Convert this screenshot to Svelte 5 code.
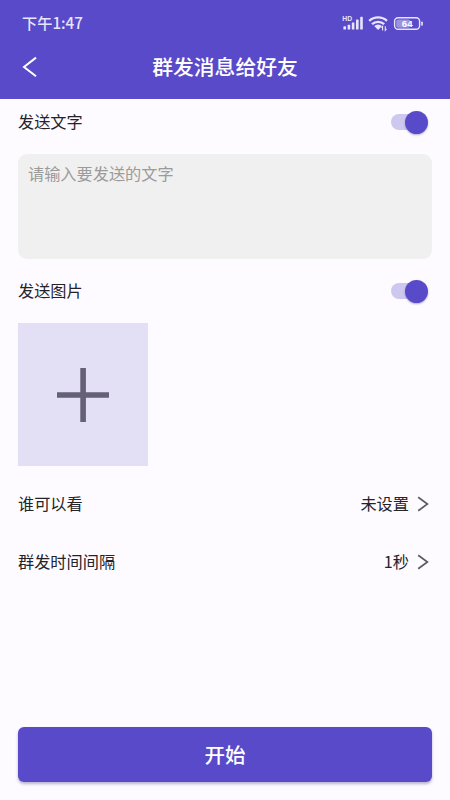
<script lang="ts">
  let sendText = true;
  let sendImage = true;
  let message = '';

  const settings = [
    { label: '谁可以看', value: '未设置' },
    { label: '群发时间间隔', value: '1秒' },
  ];
</script>

<div class="screen">
  <header>
    <div class="status-bar">
      <span class="time">下午1:47</span>
      <svg class="status-icons" width="84" height="20" viewBox="0 0 84 20" aria-hidden="true">
        <text class="hd" x="0.3" y="7.6">HD</text>
        <g fill="#e8e4fb">
          <rect x="1.4" y="13.2" width="2.6" height="3.4" rx="0.6" />
          <rect x="5.6" y="11.8" width="2.6" height="4.8" rx="0.6" />
          <rect x="9.8" y="9.4" width="2.6" height="7.2" rx="0.6" />
          <rect x="14" y="6.6" width="2.6" height="10" rx="0.6" />
          <rect x="18.2" y="3.8" width="2.6" height="12.8" rx="0.6" />
        </g>
        <g fill="none" stroke="#e8e4fb" stroke-width="2.3">
          <path d="M27.2 7.8a13.2 13.2 0 0 1 17.8 0" />
          <path d="M30 11.2a9 9 0 0 1 12.2 0" />
        </g>
        <path d="M32.2 13a5.8 5.8 0 0 1 7.8 0L36.1 17z" fill="#e8e4fb" />
        <path
          d="M40.6 17.5v-4.1l-1.2 1.3M43.3 13.2v4.1l1.2-1.3"
          fill="none"
          stroke="#e8e4fb"
          stroke-width="1.1"
        />
        <rect x="54.2" y="6.4" width="14" height="8.3" rx="2" fill="#9c92df" />
        <rect
          x="52.6"
          y="4.8"
          width="25"
          height="11.5"
          rx="3.5"
          fill="none"
          stroke="#e8e4fb"
          stroke-width="1.4"
        />
        <rect x="79.2" y="8.5" width="1.6" height="4.2" rx="0.7" fill="#e8e4fb" />
        <text class="battery" x="65.2" y="14">64</text>
      </svg>
    </div>
    <div class="nav">
      <button type="button" class="back" aria-label="返回">
        <svg width="16" height="22" viewBox="0 0 16 22">
          <path d="M14 1.6 2 11l12 9.2" />
        </svg>
      </button>
      <h1>群发消息给好友</h1>
    </div>
  </header>

  <main>
    <div class="row">
      <span class="label">发送文字</span>
      <button
        type="button"
        class="switch"
        class:on={sendText}
        role="switch"
        aria-checked={sendText}
        aria-label="发送文字"
        on:click={() => (sendText = !sendText)}
      ></button>
    </div>
    <textarea bind:value={message} placeholder="请输入要发送的文字"></textarea>

    <div class="row">
      <span class="label">发送图片</span>
      <button
        type="button"
        class="switch"
        class:on={sendImage}
        role="switch"
        aria-checked={sendImage}
        aria-label="发送图片"
        on:click={() => (sendImage = !sendImage)}
      ></button>
    </div>
    <button type="button" class="add-image" aria-label="添加图片">
      <svg width="52" height="54" viewBox="0 0 52 54">
        <path d="M23.3 0h5.6v24.2H52v5.6H28.9V54h-5.6V29.8H0v-5.6h23.3z" />
      </svg>
    </button>

    <div class="settings">
      {#each settings as item}
        <button type="button" class="setting">
          <span class="label">{item.label}</span>
          <span class="label value">{item.value}</span>
          <svg width="12" height="16" viewBox="0 0 12 16">
            <path d="M1.2 1.2 10.4 8l-9.2 6.8" />
          </svg>
        </button>
      {/each}
    </div>
  </main>

  <footer>
    <button type="button" class="start">开始</button>
  </footer>
</div>

<style>
  :global(body) {
    background: #fdfbff;
  }

  .screen {
    display: flex;
    flex-direction: column;
    height: 100vh;
    min-height: 680px;
    box-sizing: border-box;
    background: #fdfbff;
    color: #242328;
    font-family: 'Noto Sans CJK SC', sans-serif;
    font-size: 16.2px;
    line-height: 24px;
  }

  button {
    margin: 0;
    padding: 0;
    border: 0;
    background: none;
    color: inherit;
    font: inherit;
    cursor: pointer;
  }

  header {
    height: 99px;
    background: #594aca;
    color: #fff;
  }

  .status-bar {
    display: flex;
    align-items: center;
    justify-content: space-between;
    height: 46px;
    padding: 0 24px 0 22px;
  }

  .time {
    padding-bottom: 2px;
    color: #e8e4fb;
    font-size: 15.2px;
    font-weight: 500;
  }

  .hd {
    fill: #e8e4fb;
    font: bold 6.8px 'Liberation Sans', sans-serif;
  }

  .battery {
    fill: #fff;
    font: bold 9.6px 'Liberation Sans', sans-serif;
    text-anchor: middle;
  }

  .nav {
    display: grid;
    grid-template-columns: 36px 1fr 36px;
    align-items: center;
    height: 42px;
    padding: 0 10px;
  }

  .back {
    display: flex;
    justify-content: flex-end;
    padding-right: 8px;
  }

  .back path {
    fill: none;
    stroke: #fff;
    stroke-width: 2;
  }

  h1 {
    margin: 0;
    padding-bottom: 2px;
    font-size: 20.8px;
    font-weight: 500;
    line-height: 30px;
    text-align: center;
  }

  main {
    flex: 1;
    padding: 0 18px;
  }

  .row {
    display: flex;
    align-items: center;
    justify-content: space-between;
    height: 46px;
    margin-bottom: 9px;
    padding-right: 6px;
  }

  .label {
    padding-bottom: 2px;
  }

  .switch {
    display: flex;
    align-items: center;
    width: 33px;
    height: 16px;
    border-radius: 8px;
    margin-right: 2px;
    background: #dddce2;
  }

  .switch::before {
    content: '';
    width: 23px;
    height: 23px;
    flex: none;
    border-radius: 50%;
    background: #fff;
    box-shadow: 0 1px 2px rgba(40, 30, 100, 0.35);
    transition: transform 0.15s;
  }

  .switch.on {
    background: #cdc8ef;
  }

  .switch.on::before {
    background: #594aca;
    transform: translateX(14px);
  }

  textarea {
    display: block;
    width: 100%;
    height: 105px;
    margin-bottom: 9px;
    box-sizing: border-box;
    padding: 7px 10px;
    border: 0;
    border-radius: 9px;
    outline: 0;
    background: #f0f0f0;
    color: inherit;
    font: inherit;
    resize: none;
  }

  textarea::placeholder {
    color: #9b9b9b;
    opacity: 1;
  }

  .add-image {
    display: grid;
    place-items: center;
    width: 130px;
    height: 143px;
    background: #e3dff5;
  }

  .add-image path {
    fill: #665f78;
  }

  .settings {
    padding-top: 9px;
  }

  .setting {
    display: flex;
    align-items: center;
    width: 100%;
    height: 58px;
    padding-right: 3px;
  }

  .value {
    margin: 0 8px 0 auto;
  }

  .setting path {
    fill: none;
    stroke: #5d5b62;
    stroke-width: 1.7;
  }

  footer {
    padding: 0 18px 18px;
  }

  .start {
    display: block;
    width: 100%;
    height: 55px;
    padding-bottom: 2px;
    border-radius: 6px;
    background: #594aca;
    box-shadow: 0 2px 3px rgba(50, 40, 110, 0.35);
    color: #fff;
    font-size: 20.5px;
    font-weight: 500;
  }
</style>
